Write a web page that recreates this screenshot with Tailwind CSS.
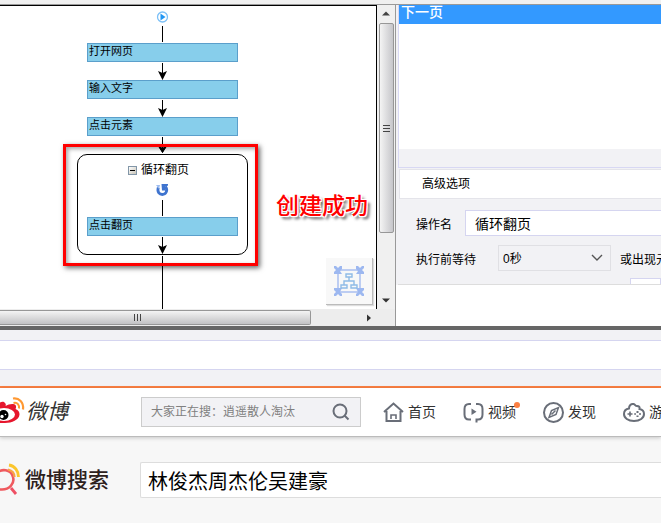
<!DOCTYPE html>
<html lang="zh-CN">
  <head>
    <meta charset="UTF-8" />
    <meta name="viewport" content="width=device-width, initial-scale=1.0" />
    <title>循环翻页</title>
    <script src="https://cdn.jsdelivr.net/npm/@tailwindcss/browser@4"></script>
  </head>
  <body class="min-h-screen overflow-hidden bg-[#f7f7f7] font-['Liberation_Sans','Noto_Sans_CJK_SC',sans-serif] text-xs text-black">
    <!-- Workflow editor -->
    <main class="flex border-b-4 border-[#666] bg-[#f0f0f0] pt-1">
      <!-- Canvas with scrollbars -->
      <section class="w-[396px] shrink-0 border-t border-r border-[#999]">
        <div class="flex">
          <div class="relative h-[304px] flex-1 border-t border-r border-black bg-white">
            <svg class="absolute top-0 left-0 h-[303px] w-[376px]" viewBox="0 6 376 303" fill="none">
              <circle cx="162.500" cy="17" r="5" fill="#fff" stroke="#7cc0f7" stroke-width="1.300" />
              <path d="M160.500 13.500v7l5-3.500z" fill="#2196f3" />
              <path d="M162.500 26v16M162.500 63v14M162.500 100v14M162.500 137v12" stroke="#000" />
              <path d="M158 71l4.500 2 4.500-2-4.500 9zM158 108l4.500 2 4.500-2-4.500 9zM158 146l4.500 2 4.500-2-4.500 7z" fill="#000" />
            </svg>
            <div class="absolute top-[37px] left-[87px] h-[19px] w-[151px] border border-[#5b9fcb] bg-[#87ceeb] px-px text-[11px] leading-[15px]">打开网页</div>
            <div class="absolute top-[74px] left-[87px] h-[19px] w-[151px] border border-[#5b9fcb] bg-[#87ceeb] px-px text-[11px] leading-[15px]">输入文字</div>
            <div class="absolute top-[111px] left-[87px] h-[19px] w-[151px] border border-[#5b9fcb] bg-[#87ceeb] px-px text-[11px] leading-[15px]">点击元素</div>

            <!-- Loop group -->
            <div class="absolute top-[148px] left-[77px] h-[101px] w-[171px] rounded-[10px] border border-black bg-white"></div>
            <button type="button" aria-label="折叠" class="absolute top-[160px] left-[128px] flex size-[9px] items-center justify-center border border-[#8296a8] bg-linear-to-br from-white to-[#c8c4b8]">
              <span class="h-px w-[5px] bg-black"></span>
            </button>
            <div class="absolute top-[156px] left-[141px] leading-4">循环翻页</div>
            <svg class="absolute top-[140px] left-0 h-[163px] w-[376px]" viewBox="0 146 376 163" fill="none">
              <path d="M158.300 187.500c-1.500 5 1.500 7 4 7 3.500 0 6-4 3.200-8" stroke="#3f74cf" stroke-width="2.800" />
              <path d="M161.500 184h6.500v1.500l-3 1.500v3.500h-3z" fill="#3f74cf" />
              <path d="M156 185h4l-1 4z" fill="#9dbcf0" />
              <path d="M162.500 200v16M162.500 237v12M162.500 256v53" stroke="#000" />
              <path d="M158 146l4.500 2 4.500-2-4.500 7zM158 245l4.500 2 4.500-2-4.500 9z" fill="#000" />
            </svg>
            <div class="absolute top-[211px] left-[87px] h-[19px] w-[151px] border border-[#5b9fcb] bg-[#87ceeb] px-px text-[11px] leading-[15px]">点击翻页</div>
            <div class="absolute top-[138px] left-[63px] h-[122px] w-[195px] border-3 border-[#f00] shadow-[2px_2px_5px_rgba(0,0,0,0.6),inset_2px_2px_4px_rgba(0,0,0,0.35)]"></div>

            <div class="absolute top-[182px] left-[276px] text-[23px] leading-9 font-medium text-[#f00] [text-shadow:-1px_-1px_0_#fff,1px_-1px_0_#fff,-1px_1px_0_#fff,1px_1px_0_#fff,3px_3px_3px_#555]">创建成功</div>

            <button type="button" aria-label="适应画布" class="absolute top-[252px] left-[326px] flex size-[47px] items-center justify-center border-r border-b border-[#bbb] bg-[#f8f8f8] shadow-[1px_1px_1px_#ddd]">
              <svg class="size-8" viewBox="0 0 32 32" fill="none">
                <path d="M5 5h22v22H5z" stroke="#a9bff0" stroke-width="1.500" />
                <path d="M1 1h2l2 2 2-2h2v3L7 6l2 3H1V7l2-2-2-2zM31 1h-2l-2 2-2-2h-2v3l2 2-2 3h8V7l-2-2 2-2zM1 31h2l2-2 2 2h2v-2l-2-2 2-4H1v2l2 2-2 2zM31 31h-2l-2-2-2 2h-2v-2l2-2-2-4h8v2l-2 2 2 2z" fill="#9db8f0" />
                <path d="M16 12v4M11 20v-4h10v4M13 9h6v3h-6zM8 20h6v3H8zM18 20h6v3h-6z" stroke="#8fbbe6" stroke-width="1.400" />
              </svg>
            </button>
          </div>
          <!-- Vertical scrollbar -->
          <div class="flex w-[18px] flex-col items-center bg-[#f0f0f0]">
            <svg class="h-[18px] w-4" viewBox="0 0 16 18"><path d="M4 10.500l4-4 4 4z" fill="#444" /></svg>
            <div class="flex h-[210px] w-[15px] flex-col items-center justify-center gap-0.5 rounded-xs border border-[#979797] bg-linear-to-r from-[#f4f4f4] to-[#c6c6ca]">
              <span class="h-px w-[7px] bg-[#444]"></span>
              <span class="h-px w-[7px] bg-[#444]"></span>
              <span class="h-px w-[7px] bg-[#444]"></span>
            </div>
            <svg class="mt-auto h-[18px] w-4" viewBox="0 0 16 18"><path d="M4 7.500l4 4 4-4z" fill="#333" /></svg>
          </div>
        </div>
        <!-- Horizontal scrollbar -->
        <div class="flex h-[17px] items-center bg-[#ededed]">
          <div class="flex h-[15px] w-[311px] items-center rounded-r-xs border border-l-0 border-[#979797] bg-linear-to-b from-[#f4f4f4] to-[#c2c2c4] pl-[134px]">
            <div class="flex gap-0.5">
              <span class="h-[7px] w-px bg-[#444]"></span>
              <span class="h-[7px] w-px bg-[#444]"></span>
              <span class="h-[7px] w-px bg-[#444]"></span>
            </div>
          </div>
          <svg class="ml-auto h-4 w-[54px]" viewBox="0 0 54 16"><path d="M26 4.500l4 3.500-4 3.500z" fill="#333" /></svg>
        </div>
      </section>

      <!-- Step options -->
      <section class="flex min-w-0 flex-1 flex-col overflow-hidden border-t border-[#999] bg-[#f2f2f5] pl-0.5">
        <div class="border-b border-l border-[#d8d8f3]">
          <div class="h-[19px] bg-[#3399ff] px-0.5 text-sm leading-[15px] font-medium text-white">下一页</div>
          <div class="h-[125px] bg-white"></div>
          <div class="h-[18px]"></div>
        </div>
        <h2 class="mt-px ml-px h-[30px] border border-r-0 border-[#e4e4ea] bg-white pl-[22px] leading-7">高级选项</h2>
        <form class="flex h-[86px] flex-col gap-[9px] overflow-hidden border-b border-[#ddd] pt-[11px] pl-[18px] whitespace-nowrap">
          <div class="flex shrink-0 items-center">
            <label for="stepName" class="w-[49px] shrink-0 pt-1">操作名</label>
            <input id="stepName" type="text" value="循环翻页" class="h-[26px] min-w-0 flex-1 border border-r-0 border-[#d5d5f0] bg-white px-[9px] text-sm" />
          </div>
          <div class="flex shrink-0 items-center">
            <label for="waitTime" class="w-[82px] shrink-0 pt-1">执行前等待</label>
            <div class="relative w-[113px] shrink-0">
              <select id="waitTime" class="block h-[26px] w-full appearance-none border border-[#e0e0e4] bg-[#f2f2f5] pt-0.5 pl-1 text-xs">
                <option>0秒</option>
              </select>
              <svg class="pointer-events-none absolute top-[9px] right-2 h-2 w-3" viewBox="0 0 12 8" fill="none"><path d="M1 1l5 5 5-5" stroke="#555" stroke-width="1.400" /></svg>
            </div>
            <label for="waitElement" class="ml-[9px] shrink-0 pt-1">或出现元素</label>
          </div>
          <input id="waitElement" type="text" aria-label="或出现元素" class="-mt-0.5 ml-[214px] h-6 shrink-0 border border-[#d5d5f0] bg-white" />
        </form>
        <div class="-ml-0.5 flex-1 bg-white"></div>
      </section>
    </main>

    <!-- Address bar -->
    <div class="border-b-2 border-[#fb7f42] bg-[#f2f2f5] pt-[10px] pb-4">
      <input type="text" aria-label="网址" class="block h-[30px] w-full border-y border-[#d5d5f0] bg-white px-2" />
    </div>

    <!-- Weibo header -->
    <header class="flex h-[49px] items-center overflow-hidden border-b border-[#bbb] bg-white whitespace-nowrap shadow-[0_1px_4px_rgba(0,0,0,0.2)]">
      <a href="#" class="flex w-[141px] shrink-0 items-center">
        <svg class="h-8 w-[26px]" viewBox="0 0 26 32" fill="none">
          <path d="M0 6.500c2-1 4-1 5 .500 1 1 1 2 .500 3 3-2 8-3 10-1 1 1.500.500 3 0 4 3 1 4 3 4 5.500C19 24 12 27 5 27H0z" fill="#e6162d" />
          <ellipse cx="4" cy="18.500" rx="11" ry="6.500" fill="#fff" />
          <circle cx="3.500" cy="19" r="5" fill="#000" />
          <circle cx="2" cy="20.500" r="1.700" fill="#fff" />
          <circle cx="5.500" cy="18.500" r=".8" fill="#fff" />
          <path d="M13 2.500c6-1 11 4 10 11" stroke="#ff9933" stroke-width="2.200" />
          <path d="M13.500 7c4-1 6 2 5.500 5.500" stroke="#ff9933" stroke-width="2" />
        </svg>
        <span class="text-[21px] text-[#333] italic">微博</span>
      </a>
      <form class="flex h-[30px] w-[220px] shrink-0 items-center border border-[#ccc] bg-[#f2f2f5]">
        <input type="text" aria-label="搜索" placeholder="大家正在搜：逍遥散人淘汰" class="min-w-0 flex-1 pl-[9px] text-xs placeholder:text-[#808080]" />
        <button type="button" aria-label="搜索" class="flex w-7 items-center">
          <svg class="size-[18px]" viewBox="0 0 18 18" fill="none" stroke="#696e78" stroke-width="2"><circle cx="8" cy="8" r="6.500" /><path d="M12.500 12.500l4 4" /></svg>
        </button>
      </form>
      <nav class="flex gap-[27px] pl-[22px] text-sm text-[#333]">
        <a href="#" class="flex items-center gap-1">
          <svg class="size-[21px]" viewBox="0 0 21 21" fill="none" stroke="#696e78" stroke-width="2">
            <path d="M1 10l9.500-8.500 9.500 8.500M3.500 9v10h14V9" />
            <path d="M8 17v-4h5v4" stroke-width="1.600" />
          </svg>
          首页
        </a>
        <a href="#" class="relative flex items-center gap-1">
          <svg class="size-[21px]" viewBox="0 0 21 21" fill="none" stroke="#696e78" stroke-width="2">
            <path d="M8 2H6C3 2 1.500 4 1.500 7v5.500c0 3 1.500 5 4.500 5h2M13 2h2c3 0 4.500 2 4.500 5v5.500c0 3-1.500 5-4.500 5h-1.500v3" />
            <path d="M8.500 6.500v6.500l5-3.200z" fill="#696e78" stroke="none" />
          </svg>
          视频
          <span class="absolute top-0 -right-1 size-1.5 rounded-full bg-[#fb7f42]"></span>
        </a>
        <a href="#" class="flex items-center gap-1">
          <svg class="size-[21px]" viewBox="0 0 21 21" fill="none" stroke="#696e78" stroke-width="2">
            <circle cx="10.500" cy="10.500" r="9.500" />
            <path d="M15.500 5.500l-2.500 7-7 3 2.500-7zM8.500 12.500l4-4" stroke-width="1.500" />
          </svg>
          发现
        </a>
        <a href="#" class="flex items-center gap-1">
          <svg class="h-[21px] w-[22px]" viewBox="0 0 22 21" fill="none" stroke="#696e78" stroke-width="2">
            <path d="M6 6.500c0-3 2-5 4.500-4.500 2 .5 1.500 2 3.500 2s3 1 2.500 3c3 .5 4.500 2.500 4.500 5 0 4-4 7-10 7S1 16 1 12c0-3 2-5 5-5.500z" />
            <path d="M4.500 12h5M7 9.500v5" stroke-width="1.600" />
            <path d="M13.500 9h2v2h-2zM16 11.200h2v1.600h-2zM11.200 11.200h1.800v1.600h-1.800zM13.500 13.500h2v1.500h-2z" fill="#696e78" stroke="none" />
          </svg>
          游戏
        </a>
      </nav>
    </header>

    <!-- Weibo search -->
    <section class="flex items-center pt-[25px]">
      <a href="#" class="flex w-[140px] shrink-0 items-center">
        <svg class="h-9 w-[25px]" viewBox="0 0 25 36" fill="none">
          <path d="M-4 12c5-6 15-5 17 3 2 7-4 12.500-11 12.500h-4" stroke="#ef5a5f" stroke-width="2.600" />
          <path d="M11 26l5 6" stroke="#ef5064" stroke-width="2.800" />
          <path d="M9 3c6 1 9.500 6 9.500 12" stroke="#fbc62c" stroke-width="2.800" />
          <path d="M8 7.500c4 1 6.500 4 6.500 7.500" stroke="#f8a445" stroke-width="2.200" />
        </svg>
        <span class="text-[21px] font-medium text-[#2d211d]">微博搜索</span>
      </a>
      <input type="text" aria-label="搜索关键词" value="林俊杰周杰伦吴建豪" class="h-9 min-w-0 flex-1 rounded-l-xs border border-r-0 border-[#ddd] bg-white pl-[7px] text-xl" />
    </section>
  </body>
</html>
